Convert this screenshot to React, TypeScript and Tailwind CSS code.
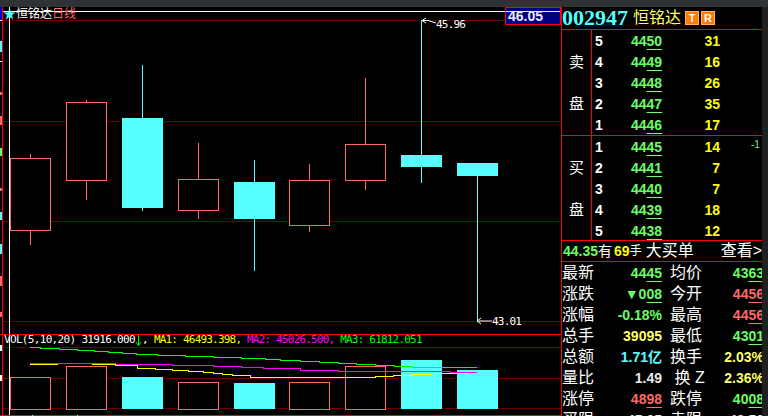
import React from 'react';

const RED = '#ff6666';
const CYAN = '#54ffff';
const MONO = '"DejaVu Sans Mono", monospace';

type Candle = { x: number; top: number; bottom: number; hi: number; lo: number; up: boolean };

const candles: Candle[] = [
  { x: 10, top: 158, bottom: 230, hi: 154, lo: 245, up: true },
  { x: 66, top: 102, bottom: 180, hi: 100, lo: 200, up: true },
  { x: 122, top: 118, bottom: 208, hi: 65, lo: 211, up: false },
  { x: 178, top: 179, bottom: 210, hi: 143, lo: 219, up: true },
  { x: 234, top: 182, bottom: 219, hi: 160, lo: 271, up: false },
  { x: 289, top: 180, bottom: 225, hi: 164, lo: 232, up: true },
  { x: 345, top: 144, bottom: 180, hi: 78, lo: 190, up: true },
  { x: 401, top: 155, bottom: 167, hi: 20, lo: 183, up: false },
  { x: 457, top: 163, bottom: 176, hi: 163, lo: 322, up: false },
];

const volumes = [
  { x: 10, top: 377, up: true },
  { x: 66, top: 366, up: true },
  { x: 122, top: 377, up: false },
  { x: 178, top: 382, up: true },
  { x: 234, top: 383, up: false },
  { x: 289, top: 382, up: true },
  { x: 345, top: 366, up: true },
  { x: 401, top: 360, up: false },
  { x: 457, top: 370, up: false },
];

// clipped axis labels at the far left
const axisBits: [number, number, string][] = [
  [41, 11, CYAN],
  [61, 1, '#ffffff'],
  [92, 3, RED],
  [116, 9, RED],
  [148, 8, '#66ff66'],
  [188, 3, RED],
  [212, 8, CYAN],
  [244, 10, CYAN],
  [276, 10, RED],
  [312, 5, RED],
  [345, 6, '#ffffff'],
  [375, 6, '#ffffff'],
];

const asks = [
  ['5', '44', '50', '31'],
  ['4', '44', '49', '16'],
  ['3', '44', '48', '26'],
  ['2', '44', '47', '35'],
  ['1', '44', '46', '17'],
];
const bids = [
  ['1', '44', '45', '14'],
  ['2', '44', '41', '7'],
  ['3', '44', '40', '7'],
  ['4', '44', '39', '18'],
  ['5', '44', '38', '12'],
];

function U({ children }: { children: React.ReactNode }) {
  return <span className="underline underline-offset-[3px]">{children}</span>;
}

function Chart() {
  return (
    <svg width="561" height="409" viewBox="0 7 561 409" className="block shrink-0" shapeRendering="crispEdges">
      {[20, 121, 221, 321, 347, 378, 408].map((y) => (
        <rect key={y} x="3" y={y} width="558" height="1" fill="#660000" />
      ))}
      <rect x="3" y="11" width="558" height="1" fill="#ffffff" />
      <rect x="0" y="7" width="3" height="13" fill="#0000cc" />
      <rect x="0" y="20" width="2" height="1" fill="#ffffff" />
      <rect x="2" y="7" width="1" height="409" fill="#ff0000" />
      <rect x="9" y="7" width="1" height="409" fill="#ffffff" />
      <rect x="0" y="334" width="561" height="1" fill="#ff0000" />
      <rect x="0" y="415" width="561" height="1" fill="#ff0000" />
      <rect x="32" y="415" width="1" height="1" fill="#ffffff" />
      <rect x="77" y="415" width="1" height="1" fill="#ffffff" />
      {axisBits.map(([y, h, c]) => (
        <rect key={y} x="0" y={y} width="2" height={h} fill={c} />
      ))}

      {candles.map((c) => {
        const mid = c.x + 20;
        const color = c.up ? RED : CYAN;
        return (
          <g key={c.x}>
            <rect x={mid} y={c.hi} width="1" height={c.lo - c.hi} fill={color} />
            {c.up ? (
              <rect x={c.x + 0.5} y={c.top + 0.5} width="40" height={c.bottom - c.top} fill="#000" stroke={color} />
            ) : (
              <rect x={c.x} y={c.top} width="41" height={c.bottom - c.top} fill={color} />
            )}
          </g>
        );
      })}

      {volumes.map((v) =>
        v.up ? (
          <rect key={v.x} x={v.x + 0.5} y={v.top + 0.5} width="40" height={408.5 - v.top} fill="#000" stroke={RED} />
        ) : (
          <rect key={v.x} x={v.x} y={v.top} width="41" height={409 - v.top} fill={CYAN} />
        ),
      )}

      {/* moving averages */}
      <path
        d="M30 347.5H40V348.5H59V349.5H77V350.5H94V351.5H108V352.5H122V353.5H136V354.5H157V355.5H185V356.5H213V357.5H241V358.5H265V359.5H280V360.5H300V361.5H319V362.5H338V363.5H356V364.5H375V365.5H394V366.5H412V367.5H477"
        fill="none"
        stroke="#00ff00"
      />
      <path d="M30 363.5H115V364.5H172V365.5H213V366.5H241V367.5H263V368.5H300V370.5H338V371.5H450V372.5H477" fill="none" stroke="#ff00ff" />
      <path
        d="M30 364.5H58M92 364.5H115V365.5H137V368.5H155V369.5H172V370.5H188V371.5H203V372.5H213V373.5H222V374.5H232V375.5H250V377.5H375V376.5H393V375.5H412V374.5H432V373.5H470"
        fill="none"
        stroke="#ffff00"
      />

      {/* high / low pointers */}
      <path d="M426 18L422 20.5L426 23M422 20.5H428L436 23" fill="none" stroke="#ffffff" shapeRendering="auto" />
      <path d="M481 318L477 321L481 324M477 321H492" fill="none" stroke="#ffffff" shapeRendering="auto" />
    </svg>
  );
}

function BookRows({ rows }: { rows: string[][] }) {
  return (
    <div className="flex flex-col flex-1 pt-px font-bold text-[14px]">
      {rows.map((r) => (
        <div key={r[0]} className="flex h-[21px] shrink-0 items-center">
          <span className="w-[39px] pl-[3px] text-white">{r[0]}</span>
          <span className="w-[31px] text-[#66ff66] whitespace-nowrap">
            {r[1]}
            <U>{r[2]}</U>
          </span>
          <span className="w-[58px] text-right text-[#ffff00]">{r[3]}</span>
        </div>
      ))}
    </div>
  );
}

function Side({ a, b }: { a: string; b: string }) {
  return (
    <div className="w-[30px] shrink-0 border-r border-[#ff0000] flex flex-col items-center pt-[24px] gap-[26px] text-[15px] leading-[16px] text-white">
      <span>{a}</span>
      <span>{b}</span>
    </div>
  );
}

function StatValue({ children, cls }: { children: React.ReactNode; cls: string }) {
  return <span className={`font-bold text-[14px] whitespace-nowrap ${cls}`}>{children}</span>;
}

const stats: [string, React.ReactNode, string, string, React.ReactNode, string][] = [
  ['最新', <>44<U>45</U></>, 'text-[#66ff66]', '均价', <>43<U>63</U></>, 'text-[#66ff66]'],
  ['涨跌', <>▼0<U>08</U></>, 'text-[#66ff66]', '今开', <>44<U>56</U></>, 'text-[#ff6666]'],
  ['涨幅', '-0.18%', 'text-[#66ff66]', '最高', <>44<U>56</U></>, 'text-[#ff6666]'],
  ['总手', '39095', 'text-[#ffff66]', '最低', <>43<U>01</U></>, 'text-[#66ff66]'],
  ['总额', '1.71亿', 'text-[#54ffff]', '换手', '2.03%', 'text-[#ffff66]'],
  ['量比', '1.49', 'text-[#e8e8e8]', ' 换 Z', '2.36%', 'text-[#ffff66]'],
  ['涨停', <>48<U>98</U></>, 'text-[#ff6666]', '跌停', <>40<U>08</U></>, 'text-[#66ff66]'],
  ['买限', '45.05', 'text-[#e8e8e8]', '卖限', '43.50', 'text-[#e8e8e8]'],
];

function Badge({ children }: { children: React.ReactNode }) {
  return (
    <span className="w-[14px] h-[14px] bg-[#ff7a00] border border-[#ffb060] text-white text-[11px] font-bold leading-[12px] text-center">
      {children}
    </span>
  );
}

export default function App() {
  return (
    <div
      className="relative w-[768px] h-[416px] overflow-hidden bg-black flex flex-col"
      style={{ fontFamily: '"Liberation Sans", "Noto Sans CJK SC", sans-serif' }}
    >
      <div className="h-[7px] shrink-0 bg-[#2f3336]" />
      <div className="flex flex-1 min-h-0">
        <Chart />
        <div className="w-[201px] shrink-0 border-l border-[#ff0000] flex flex-col overflow-hidden">
          <div className="h-[23px] shrink-0 flex items-center border-b border-[#ff0000]">
            <span className="text-[#54ffff] font-bold text-[22px] leading-none" style={{ fontFamily: '"Liberation Serif", serif' }}>
              002947
            </span>
            <span className="ml-[5px] text-[#ffff66] text-[16px] leading-none">恒铭达</span>
            <span className="ml-[4px] flex gap-[2px]">
              <Badge>T</Badge>
              <Badge>R</Badge>
            </span>
          </div>
          <div className="h-[106px] shrink-0 flex border-b border-[#ff0000]">
            <Side a="卖" b="盘" />
            <BookRows rows={asks} />
          </div>
          <div className="h-[105px] shrink-0 flex border-b border-[#ff0000]">
            <Side a="买" b="盘" />
            <BookRows rows={bids} />
          </div>
          <div className="h-[21px] shrink-0 flex items-center border-b border-[#ff0000] text-[14px] text-white pl-[1px] whitespace-nowrap">
            <span className="text-[#66ff66] font-bold">44.35</span>
            <span>有</span>
            <span className="ml-[2px] text-[#ffff00] font-bold">69</span>
            <span className="text-[12px]">手</span>
            <span className="ml-[4px] text-[16px]">大买单</span>
            <span className="ml-auto text-[16px]">查看&gt;</span>
          </div>
          <div className="flex flex-col">
            {stats.map((s) => (
              <div key={s[0]} className="h-[21px] shrink-0 flex items-center text-white text-[16px] leading-none whitespace-nowrap">
                <span className="w-[32px] shrink-0">{s[0]}</span>
                <span className="w-[68px] shrink-0 text-right">
                  <StatValue cls={s[2]}>{s[1]}</StatValue>
                </span>
                <span className="ml-[8px] w-[32px] shrink-0 whitespace-pre">{s[3]}</span>
                <span className="w-[62px] shrink-0 text-right">
                  <StatValue cls={s[5]}>{s[4]}</StatValue>
                </span>
              </div>
            ))}
          </div>
        </div>
        <div className="flex-1 bg-[#1e2022]" />
      </div>

      {/* chart captions lie over the plot */}
      <div className="absolute left-[3px] top-[7px] flex items-center text-[12px] leading-[14px]">
        <span className="text-[#54ffff] text-[13px] w-[13px]">★</span>
        <span className="text-white">恒铭达</span>
        <span className="text-[#ff6666]">日线</span>
      </div>
      <div className="absolute left-[505px] top-[7px] w-[56px] h-[18px] bg-[#000080] border border-[#ff0000] pl-[2px] text-[#e8e8ff] font-bold text-[14px] leading-[16px]">
        <div className="absolute left-0 right-0 top-[3px] h-px bg-[#ffff66]" />
        <span className="relative">46.05</span>
      </div>
      <div className="absolute left-[436px] top-[18px] text-white text-[11px] leading-[13px] tracking-[-0.8px]" style={{ fontFamily: MONO }}>
        45.96
      </div>
      <div className="absolute left-[492px] top-[315px] text-white text-[11px] leading-[13px] tracking-[-0.8px]" style={{ fontFamily: MONO }}>
        43.01
      </div>
      <div className="absolute left-[4px] top-[333px] flex items-center whitespace-pre text-[11px] leading-[14px]" style={{ fontFamily: MONO }}>
        <span className="text-white tracking-[-0.67px]">VOL(5,10,20) 31916.000</span>
        <svg width="7" height="11" viewBox="0 0 7 11" fill="none" stroke="#00ff00" className="shrink-0">
          <path d="M3.5 0V10M1 7L3.5 10.5L6 7" />
        </svg>
        <span className="text-white tracking-[-0.67px]">, </span>
        <span className="text-[#ffff00] tracking-[-0.8px]">MA1: 46493.398, </span>
        <span className="text-[#ff00ff] tracking-[-0.8px]">MA2: 45026.500, </span>
        <span className="text-[#00ff00] tracking-[-0.8px]">MA3: 61812.051</span>
      </div>
      <div className="absolute left-[751px] top-[140px] text-[#66ff66] text-[10px] leading-none">-1</div>
    </div>
  );
}
